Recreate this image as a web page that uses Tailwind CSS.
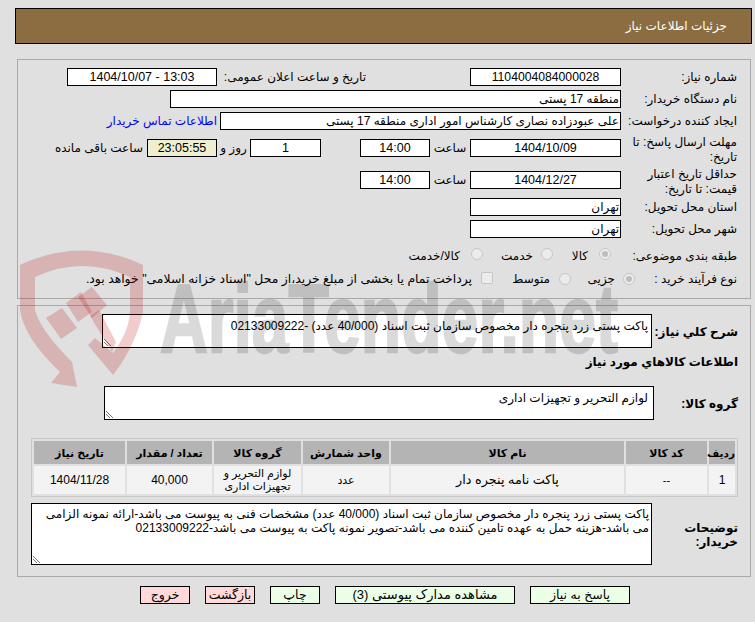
<!DOCTYPE html>
<html lang="fa" dir="rtl">
<head>
<meta charset="utf-8">
<script src="https://cdn.jsdelivr.net/npm/@tailwindcss/browser@4"></script>
</head>
<body class="relative w-[755px] h-[622px] overflow-hidden bg-[#e0e0e0] text-[12px] leading-[16px] text-black font-['Liberation_Sans','DejaVu_Sans',sans-serif]">
<svg class="absolute left-0 top-0 z-20 pointer-events-none" width="755" height="622" viewBox="0 0 755 622">
  <g fill="#b40000" fill-opacity="0.2">
    <path fill-rule="evenodd" d="M20 265 Q82 236 143 265 L143 312 Q136 345 113 375 L88 345 L95 338 L113 353 Q130 330 130 310 L130 277 Q82 255 35 277 L35 310 Q40 330 72 362 L77 387 L51 383 L60 372 Q24 338 20 310 Z"/>
    <path d="M46 318 L62 308 L77 328 L61 339 Z"/>
    <path d="M66 303 L81 292 L92 312 L78 322 Z"/>
    <path d="M78 297 L92 287 L107 305 L92 318 Z"/>
    <path d="M90 316 L99 310 L116 342 L112 352 Z"/>
  </g>
  <text x="160" y="352" fill="#000" stroke="#000" stroke-width="2.5" opacity="0.14" font-family="Liberation Sans" font-weight="700" font-size="96" textLength="458" lengthAdjust="spacingAndGlyphs" class="[direction:ltr]">AriaTender.net</text>
</svg>
<div class="relative z-10 flex flex-col">
  <header class="mr-[3px] ml-[15px] mt-[8px] h-[36px] flex items-center bg-[#8c6d42] border border-black text-white pr-[24px]">جزئیات اطلاعات نیاز</header>

  <section class="mt-[15px] mr-[4px] ml-[17px] h-[240px] border border-[#a9a9a9] pt-[8px] pr-[13px] flex flex-col whitespace-nowrap">
    <div class="flex h-[18px] items-center mb-[4px]">
      <span class="w-[116px] shrink-0">شماره نیاز:</span>
      <span class="w-[151px] h-[18px] border border-black bg-white text-center text-[12.2px]">1104004084000028</span>
      <span class="w-[104px] shrink-0"></span>
      <span class="w-[149px] shrink-0">تاریخ و ساعت اعلان عمومی:</span>
      <span class="w-[150px] h-[18px] border border-black bg-white text-center text-[12.5px]" dir="ltr">1404/10/07 - 13:03</span>
    </div>
    <div class="flex h-[18px] items-center mb-[4px]">
      <span class="w-[116px] shrink-0">نام دستگاه خریدار:</span>
      <span class="w-[451px] h-[18px] border border-black bg-white px-[1px]">منطقه 17 پستی</span>
    </div>
    <div class="flex h-[18px] items-center mb-[5px]">
      <span class="w-[116px] shrink-0">ایجاد کننده درخواست:</span>
      <span class="w-[401px] h-[18px] border border-black bg-white px-[1px]">علی عبودزاده نصاری کارشناس امور اداری منطقه 17 پستی</span>
      <a class="mr-[3px] text-[#0000ff]">اطلاعات تماس خریدار</a>
    </div>
    <div class="flex h-[32px] items-start">
      <span class="w-[116px] shrink-0 leading-[15px] whitespace-normal pl-[6px]">مهلت ارسال پاسخ: تا تاریخ:</span>
      <span class="w-[151px] h-[18px] border border-black bg-white text-center mt-[4px] text-[12.5px]">1404/10/09</span>
      <span class="w-[40px] text-center mt-[5px]">ساعت</span>
      <span class="w-[70px] h-[18px] border border-black bg-white text-center mt-[4px] text-[12.5px]">14:00</span>
      <span class="w-[39px]"></span>
      <span class="w-[71px] h-[18px] border border-black bg-white text-center mt-[4px] text-[12.5px]">1</span>
      <span class="w-[33px] mt-[5px] text-center">روز و</span>
      <span class="w-[70px] h-[18px] border border-black bg-[#efefd0] text-center mt-[4px] text-[12.5px]">23:05:55</span>
      <span class="mr-[4px] mt-[5px]">ساعت باقی مانده</span>
    </div>
    <div class="flex h-[31px] items-start">
      <span class="w-[116px] shrink-0 leading-[15px] whitespace-normal pl-[12px]">حداقل تاریخ اعتبار قیمت: تا تاریخ:</span>
      <span class="w-[151px] h-[18px] border border-black bg-white text-center mt-[4px] text-[12.5px]">1404/12/27</span>
      <span class="w-[40px] text-center mt-[5px]">ساعت</span>
      <span class="w-[70px] h-[18px] border border-black bg-white text-center mt-[4px] text-[12.5px]">14:00</span>
    </div>
    <div class="flex h-[18px] items-center mb-[4px]">
      <span class="w-[116px] shrink-0">استان محل تحویل:</span>
      <span class="w-[151px] h-[18px] border border-black bg-white px-[1px]">تهران</span>
    </div>
    <div class="flex h-[18px] items-center mb-[6px]">
      <span class="w-[116px] shrink-0">شهر محل تحویل:</span>
      <span class="w-[151px] h-[18px] border border-black bg-white px-[1px]">تهران</span>
    </div>
    <div class="flex h-[24px] items-center">
      <span class="w-[116px] shrink-0">طبقه بندی موضوعی:</span>
      <span class="w-[12px] h-[12px] rounded-full bg-[#ececec] border border-[#c6c6c6] flex items-center justify-center mr-[10px] -translate-y-[2px]"><i class="block w-[6px] h-[6px] rounded-full bg-[#bdbdbd]"></i></span>
      <span class="w-[46px] pr-[11px]">کالا</span>
      <span class="w-[12px] h-[12px] rounded-full bg-[#ececec] border border-[#c6c6c6] -translate-y-[2px]"></span>
      <span class="w-[58px] pr-[8px]">خدمت</span>
      <span class="w-[12px] h-[12px] rounded-full bg-[#ececec] border border-[#c6c6c6] -translate-y-[2px]"></span>
      <span class="pr-[11px]">کالا/خدمت</span>
    </div>
    <div class="flex h-[22px] items-center">
      <span class="w-[102px] shrink-0">نوع فرآیند خرید :</span>
      <span class="w-[12px] h-[12px] rounded-full bg-[#ececec] border border-[#c6c6c6] flex items-center justify-center"><i class="block w-[6px] h-[6px] rounded-full bg-[#bdbdbd]"></i></span>
      <span class="w-[52px] pr-[8px]">جزیی</span>
      <span class="w-[12px] h-[12px] rounded-full bg-[#ececec] border border-[#c6c6c6]"></span>
      <span class="w-[66px] pr-[9px]">متوسط</span>
      <span class="w-[12px] h-[12px] rounded-[2px] bg-[#ececec] border border-[#c6c6c6] -translate-y-[1px]"></span>
      <span class="pr-[9px] text-[12.4px]">پرداخت تمام یا بخشی از مبلغ خرید،از محل "اسناد خزانه اسلامی" خواهد بود.</span>
    </div>
  </section>

  <section class="mt-[6px] mr-[4px] ml-[17px] h-[272px] border border-[#a9a9a9] pr-[12px] flex flex-col whitespace-nowrap">
    <div class="flex h-[34px] mt-[8px] items-center">
      <span class="w-[86px] shrink-0 font-bold pt-[2px]">شرح کلي نياز:</span>
      <div class="relative w-[550px] h-[34px] border border-black bg-white pr-[3px] pt-[3px]">پاکت پستی زرد پنجره دار مخصوص سازمان ثبت اسناد (40/000 عدد) -02133009222
        <svg class="absolute left-0 bottom-0" width="9" height="9" viewBox="0 0 9 9"><path d="M1 1 L8 8 M1 4 L5 8" stroke="#777" stroke-width="1"/></svg></div>
    </div>
    <div class="font-bold mt-[6px] h-[16px] flex items-center">اطلاعات کالاهاي مورد نياز</div>
    <div class="flex h-[34px] mt-[16px] items-center">
      <span class="w-[84px] shrink-0 font-bold pt-[2px]">گروه کالا:</span>
      <div class="relative w-[550px] h-[34px] border border-black bg-white pr-[5px] pt-[3px]">لوازم التحریر و تجهیزات اداری
        <svg class="absolute left-0 bottom-0" width="9" height="9" viewBox="0 0 9 9"><path d="M1 1 L8 8 M1 4 L5 8" stroke="#777" stroke-width="1"/></svg></div>
    </div>
    <table class="mt-[18px] w-[707px] table-fixed border border-[#c8c8c8] border-separate border-spacing-[2px] text-[11px]">
      <thead><tr class="h-[23px] bg-[#b4b4b4] text-[11px]">
        <th class="w-[26px] p-0 text-[10.5px]">ردیف</th><th class="w-[81px] p-0">کد کالا</th><th class="w-[233px] p-0">نام کالا</th><th class="w-[86px] p-0">واحد شمارش</th><th class="w-[87px] p-0">گروه کالا</th><th class="w-[85px] p-0">تعداد / مقدار</th><th class="w-[91px] p-0">تاریخ نیاز</th>
      </tr></thead>
      <tbody><tr class="h-[28px] bg-[#f3f3f3] text-center">
        <td class="text-[12px] p-0">1</td><td class="p-0">--</td><td class="p-0 text-[12.8px]">پاکت نامه پنجره دار</td><td class="p-0">عدد</td><td class="p-0 leading-[13px] whitespace-normal">لوازم التحریر و تجهیزات اداری</td><td class="p-0 text-[12px]">40,000</td><td class="p-0 text-[12px]">1404/11/28</td>
      </tr></tbody>
    </table>
    <div class="flex mt-[6px]">
      <span class="w-[86px] shrink-0 font-bold pt-[18px] whitespace-normal leading-[14px] pl-[20px]">توضیحات خریدار:</span>
      <div class="relative w-[621px] h-[62px] border border-black bg-white pr-[2px] pt-[3px] leading-[14px]">پاکت پستی زرد پنجره دار مخصوص سازمان ثبت اسناد (40/000 عدد) مشخصات فنی به پیوست می باشد-ارائه نمونه الزامی<br>می باشد-هزینه حمل به عهده تامین کننده می باشد-تصویر نمونه پاکت به پیوست می باشد-02133009222
        <svg class="absolute left-0 bottom-0" width="9" height="9" viewBox="0 0 9 9"><path d="M1 1 L8 8 M1 4 L5 8" stroke="#777" stroke-width="1"/></svg></div>
    </div>
  </section>

  <nav class="mt-[9px] mr-[125px] flex gap-[15px] text-[12.5px]">
    <button class="w-[100px] h-[18px] border border-black bg-[#eaffe6] text-center leading-[16px]">پاسخ به نیاز</button>
    <button class="w-[180px] h-[18px] border border-black bg-[#eaffe6] text-center leading-[16px] text-[13px]">مشاهده مدارک پیوستی (3)</button>
    <button class="w-[50px] h-[18px] border border-black bg-[#eaffe6] text-center leading-[16px]">چاپ</button>
    <button class="w-[50px] h-[18px] border border-black bg-[#ffd9d9] text-center leading-[16px]">بازگشت</button>
    <button class="w-[50px] h-[18px] border border-black bg-[#ffd9d9] text-center leading-[16px]">خروج</button>
  </nav>
</div>
</body>
</html>
